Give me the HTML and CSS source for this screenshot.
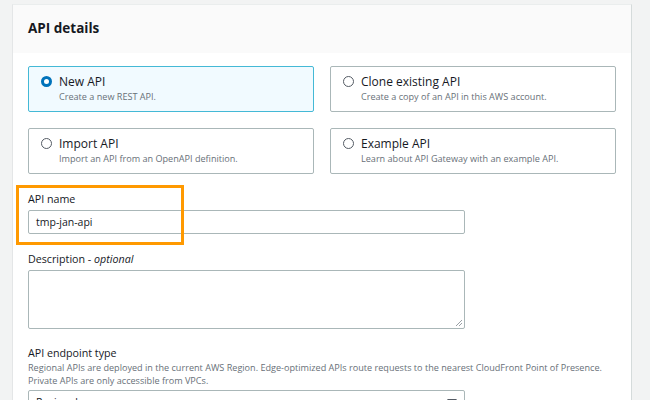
FILE: index.html
```html
<!DOCTYPE html>
<html>
<head>
<meta charset="utf-8">
<link rel="stylesheet" href="styles.css">
</head>
<body>
<div class="page">
  <section class="card">
    <header class="card-header"><h2>API details</h2></header>
    <div class="card-body">
      <div class="tiles">
        <label class="tile selected">
          <span class="radio checked"></span>
          <span class="tile-text">
            <span class="tile-title">New API</span>
            <span class="tile-desc">Create a new REST API.</span>
          </span>
        </label>
        <label class="tile">
          <span class="radio"></span>
          <span class="tile-text">
            <span class="tile-title">Clone existing API</span>
            <span class="tile-desc">Create a copy of an API in this AWS account.</span>
          </span>
        </label>
        <label class="tile">
          <span class="radio"></span>
          <span class="tile-text">
            <span class="tile-title">Import API</span>
            <span class="tile-desc">Import an API from an OpenAPI definition.</span>
          </span>
        </label>
        <label class="tile">
          <span class="radio"></span>
          <span class="tile-text">
            <span class="tile-title">Example API</span>
            <span class="tile-desc">Learn about API Gateway with an example API.</span>
          </span>
        </label>
      </div>

      <div class="field name-field">
        <div class="label">API name</div>
        <div class="input">tmp-jan-api</div>
        <div class="highlight"></div>
      </div>

      <div class="field desc-field">
        <div class="label">Description - <i>optional</i></div>
        <div class="textarea"><svg class="grip" width="8" height="8" viewBox="0 0 8 8"><path d="M7 1L1 7M7 4L4 7" stroke="#9aa0a6" stroke-width="1"/></svg></div>
      </div>

      <div class="field endpoint">
        <div class="label">API endpoint type</div>
        <div class="hint">Regional APIs are deployed in the current AWS Region. Edge-optimized APIs route requests to the nearest CloudFront Point of Presence. Private APIs are only accessible from VPCs.</div>
        <div class="select"><span>Regional</span><span class="caret"></span></div>
      </div>
    </div>
  </section>
</div>
</body>
</html>
```

FILE: styles.css
```css
* { box-sizing: border-box; }
html, body { margin: 0; padding: 0; }
body {
  background: #f2f3f3;
  font-family: "Open Sans", "Noto Sans", sans-serif;
  color: #16191f;
  width: 650px;
  height: 400px;
  overflow: hidden;
}
.page {
  padding: 4px 18px 0 12px;
}
.card {
  background: #fff;
  border-left: 1px solid #e4e6e7;
  border-right: 1px solid #d5dbdb;
  border-top: 1px solid #eaeded;
  height: 420px;
}
.card-header {
  background: #fafafa;
  height: 48px;
  padding: 0 15px;
  display: flex;
  align-items: center;
}
.card-header h2 {
  margin: 0 0 3px 0;
  font-size: 13.5px;
  font-weight: 700;
  color: #16191f;
}
.card-body {
  padding: 13px 15px 0 15px;
}
.tiles {
  display: grid;
  grid-template-columns: 286px 286px;
  column-gap: 16px;
  row-gap: 16px;
}
.tile {
  display: flex;
  align-items: flex-start;
  height: 46px;
  border: 1px solid #aab7b8;
  border-radius: 2px;
  padding: 7px 12px;
  gap: 7px;
  background: #fff;
}
.tile.selected {
  background: #f1faff;
  border-color: #44b9d6;
}
.radio {
  width: 11px;
  height: 11px;
  border-radius: 50%;
  border: 1px solid #545b64;
  margin-top: 2px;
  flex: none;
  background: #fff;
}
.radio.checked {
  border: 3px solid #0073bb;
}
.tile-text {
  display: flex;
  flex-direction: column;
}
.tile-title {
  font-size: 12px;
  line-height: 16px;
  color: #16191f;
}
.tile-desc {
  font-size: 9.1px;
  line-height: 14px;
  color: #687078;
}
.field {
  position: relative;
  width: 437px;
}
.name-field {
  margin-top: 17px;
}
.label {
  font-size: 10.7px;
  line-height: 16px;
  color: #16191f;
}
.label i { font-style: italic; }
.input {
  margin-top: 3px;
  height: 24px;
  border: 1px solid #aab7b8;
  border-radius: 2px;
  padding: 0 7px;
  display: flex;
  align-items: center;
  font-size: 10.5px;
}
.highlight {
  position: absolute;
  left: -12px;
  top: -6px;
  width: 168px;
  height: 60px;
  border: 3px solid #ff9900;
  pointer-events: none;
}
.desc-field {
  margin-top: 17px;
}
.textarea {
  position: relative;
  margin-top: 3px;
  height: 59px;
  border: 1px solid #aab7b8;
  border-radius: 2px;
}
.grip {
  position: absolute;
  right: 1px;
  bottom: 1px;
}
.field.endpoint {
  margin-top: 16px;
  width: 590px;
}
.hint {
  font-size: 9.1px;
  line-height: 13px;
  color: #687078;
}
.select {
  margin-top: 3px;
  width: 437px;
  height: 24px;
  border: 1px solid #aab7b8;
  border-radius: 2px;
  padding: 0 7px;
  display: flex;
  align-items: center;
  justify-content: space-between;
  font-size: 10.5px;
}
.caret {
  width: 0; height: 0;
  border-left: 5px solid transparent;
  border-right: 5px solid transparent;
  border-top: 6px solid #545b64;
}
```
